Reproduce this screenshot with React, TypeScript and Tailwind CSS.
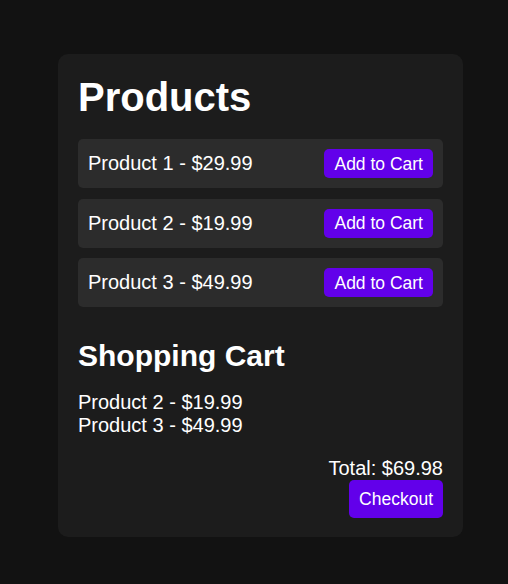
const PRODUCTS = [
  { id: 1, name: "Product 1", price: 29.99 },
  { id: 2, name: "Product 2", price: 19.99 },
  { id: 3, name: "Product 3", price: 49.99 },
];

const CART = [PRODUCTS[1], PRODUCTS[2]];

export default function App() {
  const total = CART.reduce((sum, p) => sum + p.price, 0);

  return (
    <div
      className="min-h-screen bg-[#121212] pt-[54px] pl-[58px] text-white"
      style={{ fontFamily: '"Liberation Sans", Arial, sans-serif' }}
    >
      <div className="w-[405px] rounded-[10px] bg-[#1c1c1c] px-5 pt-5 pb-[19px]">
        <h1 className="mb-[19px] text-[40px] font-bold leading-[46px]">Products</h1>
        <div className="flex flex-col gap-[10.5px]">
          {PRODUCTS.map((p) => (
            <div
              key={p.id}
              className="flex items-center justify-between rounded-[5px] bg-[#2c2c2c] p-[10px]"
            >
              <span className="text-[20px] leading-[23px]">
                {p.name} - ${p.price.toFixed(2)}
              </span>
              <button className="flex h-[29px] items-center rounded-[5px] bg-[#6200ea] px-[10px] text-[17.5px] leading-[20px] text-white">
                Add to Cart
              </button>
            </div>
          ))}
        </div>
        <h2 className="mt-[32px] mb-[17px] text-[30px] font-bold leading-[34.5px]">Shopping Cart</h2>
        <div className="flex flex-col">
          {CART.map((p) => (
            <div key={p.id} className="text-[20px] leading-[23px]">
              {p.name} - ${p.price.toFixed(2)}
            </div>
          ))}
        </div>
        <div className="mt-5 flex flex-col items-end">
          <div className="text-[20px] leading-[23px]">Total: ${total.toFixed(2)}</div>
          <button className="flex h-[38px] items-center rounded-[5px] bg-[#6200ea] px-[10px] text-[17.5px] leading-[20px] text-white">
            Checkout
          </button>
        </div>
      </div>
    </div>
  );
}
